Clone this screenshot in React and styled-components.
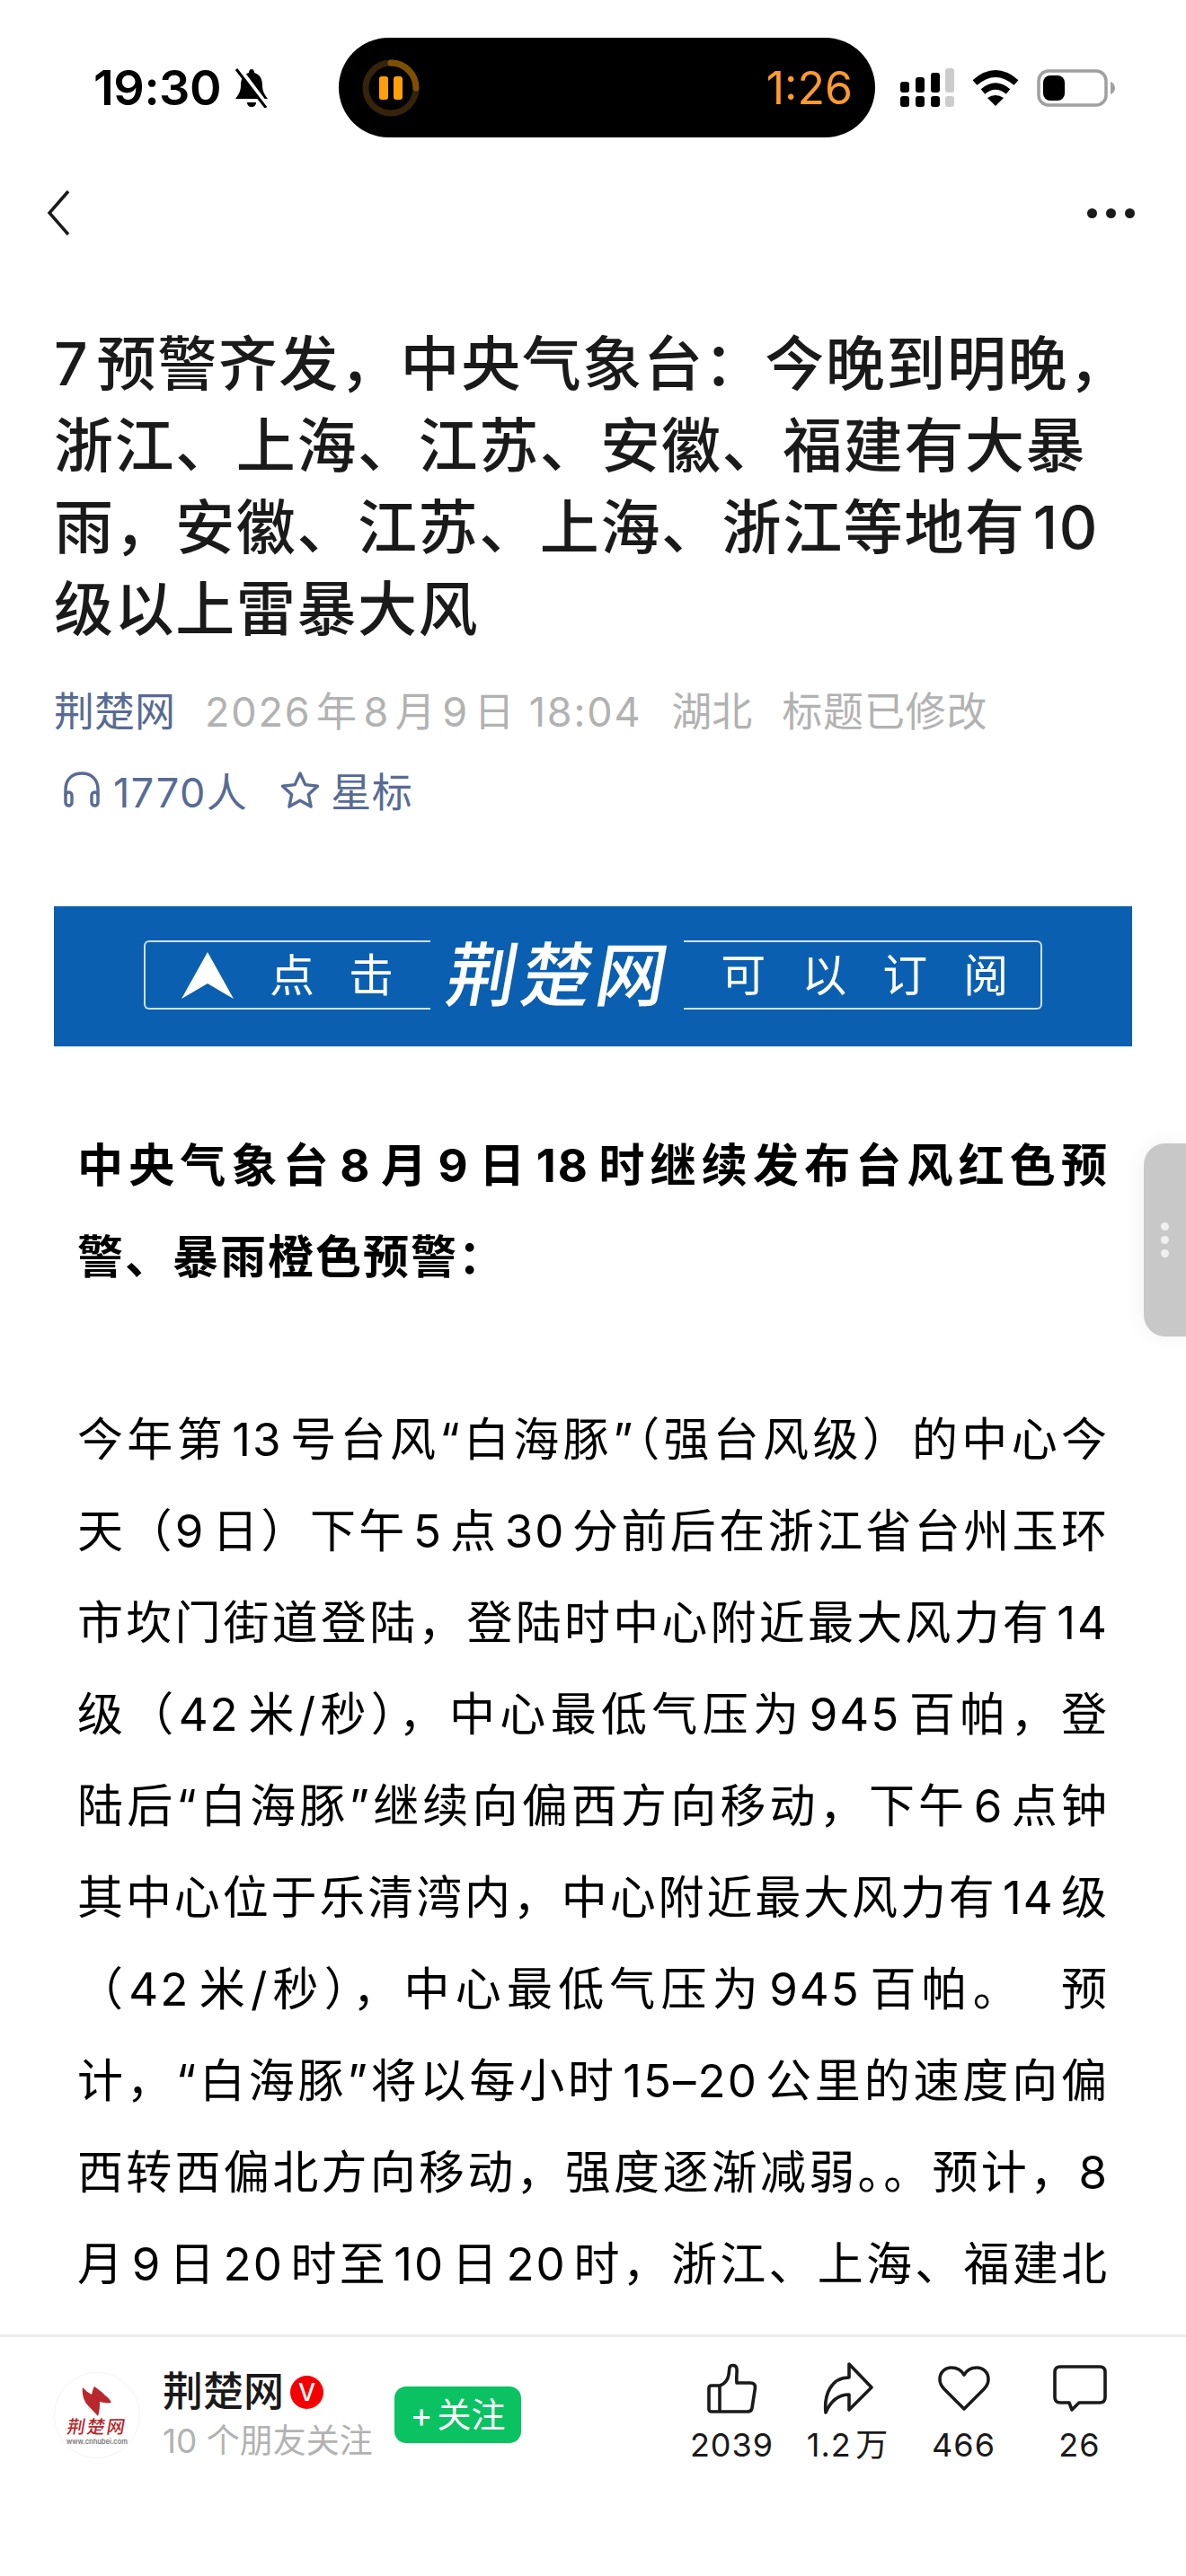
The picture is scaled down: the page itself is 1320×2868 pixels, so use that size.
import React from 'react'
import styled, { createGlobalStyle } from 'styled-components'

const sans = `Inter, "Noto Sans CJK SC", sans-serif`

const GlobalStyle = createGlobalStyle`
  html, body {
    margin: 0;
    padding: 0;
    background: #fff;
  }
  body {
    font-family: ${sans};
    text-autospace: normal;
  }
`

const Page = styled.div`
  width: 1320px;
  height: 2868px;
  display: flex;
  flex-direction: column;
  position: relative;
  overflow: hidden;
  background: #fff;
`

const StatusBar = styled.div`
  height: 111px;
  padding-top: 42px;
  display: flex;
  align-items: center;
  flex-shrink: 0;
`

const Clock = styled.div`
  width: 155px;
  margin-left: 104px;
  font-size: 54px;
  font-weight: 600;
  letter-spacing: -0.5px;
  color: #000;
`

const BellWrap = styled.div`
  width: 118px;
  display: flex;
  align-items: center;
`

const Island = styled.div`
  width: 597px;
  height: 111px;
  border-radius: 56px;
  background: #000;
  padding: 0 25px 0 26px;
  box-sizing: border-box;
  display: flex;
  align-items: center;
  justify-content: space-between;
`

const Timer = styled.div`
  font-size: 50px;
  color: #ff9a2e;
`

const StatusIcons = styled.div`
  display: flex;
  align-items: center;
  margin-left: 28px;
`

const NavBar = styled.div`
  height: 168px;
  padding: 0 57px 0 52px;
  display: flex;
  align-items: center;
  justify-content: space-between;
  flex-shrink: 0;
`

const Dots = styled.div`
  display: flex;
  gap: 10px;
`

const Dot = styled.span`
  width: 11px;
  height: 11px;
  border-radius: 50%;
  background: #1a1a1a;
`

const Header = styled.div`
  padding: 39px 60px 0;
  flex-shrink: 0;
`

const Title = styled.h1`
  margin: 0;
  font-size: 66px;
  line-height: 91px;
  font-weight: 500;
  color: #1a1a1a;
  letter-spacing: 1.6px;
`

const TitleLine = styled.span`
  display: block;
  white-space: nowrap;
`

const MetaRow = styled.div`
  margin-top: 35px;
  height: 60px;
  display: flex;
  align-items: center;
  font-size: 45px;
  color: #b2b2b2;
  white-space: nowrap;
`

const MetaItem = styled.span`
  margin-right: 33px;
  letter-spacing: ${p => p.$spacing || 0}px;
  color: ${p => (p.$link ? '#576b95' : '#b2b2b2')};
`

const InfoRow = styled.div`
  margin-top: 30px;
  height: 60px;
  display: flex;
  align-items: center;
  padding-left: 10px;
  font-size: 45px;
  color: #576b95;
`

const InfoLabel = styled.span`
  margin: 0 ${p => p.$after}px 0 ${p => p.$before}px;
  letter-spacing: ${p => p.$spacing}px;
  text-autospace: no-autospace;
`

const Banner = styled.div`
  margin: 100px 60px 0;
  height: 156px;
  background: #0a5fb0;
  padding: 38px 100px 41px;
  box-sizing: border-box;
  display: flex;
  align-items: stretch;
  flex-shrink: 0;
  color: #fff;
`

const BannerPart = styled.div`
  border: 2px solid #cfe0f2;
  border-${p => (p.$left ? 'right' : 'left')}: none;
  border-radius: ${p => (p.$left ? '6px 0 0 6px' : '0 6px 6px 0')};
  width: ${p => (p.$left ? 320 : 400)}px;
  box-sizing: border-box;
  display: flex;
  align-items: center;
  font-size: 50px;
  line-height: 1;
  white-space: nowrap;
  padding-left: ${p => (p.$left ? 40 : 41)}px;
`

const BannerWord = styled.span`
  margin-left: ${p => p.$left || 0}px;
`

const BannerBrand = styled.div`
  width: 283px;
  padding-left: 6px;
  box-sizing: border-box;
  display: flex;
  align-items: center;
  justify-content: center;
  font-size: 78px;
  font-weight: 500;
  letter-spacing: 5px;
  line-height: 1;
  white-space: nowrap;
  transform: skewX(-10deg);
`

const Article = styled.div`
  flex: 1;
  min-height: 0;
  overflow: hidden;
  margin-top: 82px;
  padding: 0 86px;
  color: #000;
  font-size: 51px;
  line-height: 102px;
  letter-spacing: 2px;
`

const Paragraph = styled.p`
  margin: 0 0 ${p => (p.$spaced ? 101 : 0)}px;
  font-weight: ${p => (p.$bold ? 700 : 400)};
`

const Line = styled.span`
  display: block;
  white-space: nowrap;
  text-align: justify;
  text-align-last: justify;
`

const SideHandle = styled.div`
  position: absolute;
  left: 1273px;
  top: 1273px;
  width: 47px;
  height: 215px;
  border-radius: 24px 0 0 24px;
  background: #c8c8c8;
  box-shadow: 0 0 24px rgba(0, 0, 0, 0.06);
  display: flex;
  flex-direction: column;
  align-items: flex-start;
  justify-content: center;
  gap: 6px;
  padding-left: 19px;
  box-sizing: border-box;
`

const HandleDot = styled.span`
  width: 9px;
  height: 9px;
  border-radius: 50%;
  background: #f0f0f0;
`

const Footer = styled.div`
  height: 269px;
  flex-shrink: 0;
  box-sizing: border-box;
  border-top: 3px solid #ececec;
  background: #fff;
  padding: 26px 54px 0 60px;
  display: flex;
  justify-content: space-between;
  align-items: flex-start;
`

const Author = styled.div`
  display: flex;
  align-items: flex-start;
  margin-top: 13px;
`

const Avatar = styled.div`
  width: 96px;
  height: 96px;
  border-radius: 50%;
  border: 1px solid #f4f4f4;
  box-sizing: border-box;
  display: flex;
  flex-direction: column;
  align-items: center;
  padding-top: 15px;
`

const AvatarName = styled.span`
  font-size: 20px;
  line-height: 24px;
  font-weight: 500;
  letter-spacing: 2px;
  color: #b8282c;
  transform: skewX(-10deg);
  white-space: nowrap;
`

const AvatarUrl = styled.span`
  font-size: 7.5px;
  line-height: 9px;
  font-weight: 600;
  color: #777;
  white-space: nowrap;
`

const AuthorText = styled.div`
  margin-left: 25px;
  width: 258px;
`

const AuthorName = styled.div`
  display: flex;
  align-items: center;
  font-size: 45px;
  line-height: 44px;
  font-weight: 500;
  color: #1a1a1a;
`

const Verified = styled.span`
  width: 37px;
  height: 37px;
  border-radius: 50%;
  margin-left: 7px;
  background: #f50000;
  color: #fff;
  font-size: 27px;
  line-height: 37px;
  font-weight: 500;
  text-align: center;
`

const Friends = styled.div`
  margin-top: 11px;
  font-size: 37px;
  line-height: 44px;
  color: #b2b2b2;
  white-space: nowrap;
`

const FollowButton = styled.div`
  margin-top: 16px;
  width: 141px;
  height: 63px;
  border-radius: 13px;
  background: #0ac261;
  color: #fff;
  font-size: 38px;
  line-height: 63px;
  display: flex;
  align-items: center;
  justify-content: center;
  gap: 5px;
  white-space: nowrap;
`

const Actions = styled.div`
  display: flex;
`

const Action = styled.div`
  width: 129px;
  display: flex;
  flex-direction: column;
  align-items: center;
  color: #1a1a1a;
`

const ActionIcon = styled.div`
  height: 62px;
  display: flex;
  align-items: center;
  justify-content: center;
`

const ActionCount = styled.div`
  margin-top: 10px;
  font-size: 36px;
  line-height: 44px;
  letter-spacing: 1px;
  white-space: nowrap;
`

const titleLines = [
  '7预警齐发，中央气象台：今晚到明晚，',
  '浙江、上海、江苏、安徽、福建有大暴',
  '雨，安徽、江苏、上海、浙江等地有10',
  '级以上雷暴大风',
]

const leadLines = [
  '中央气象台8月9日18时继续发布台风红色预',
  '警、暴雨橙色预警：',
]

const bodyLines = [
  '今年第13号台风“白海豚”（强台风级）的中心今',
  '天（9日）下午5点30分前后在浙江省台州玉环',
  '市坎门街道登陆，登陆时中心附近最大风力有14',
  '级（42米/秒），中心最低气压为945百帕，登',
  '陆后“白海豚”继续向偏西方向移动，下午6点钟',
  '其中心位于乐清湾内，中心附近最大风力有14级',
  '（42米/秒），中心最低气压为945百帕。\u00a0\u00a0预',
  '计，“白海豚”将以每小时15–20公里的速度向偏',
  '西转西偏北方向移动，强度逐渐减弱。。预计，8',
  '月9日20时至10日20时，浙江、上海、福建北',
]

function BellOff() {
  return (
    <svg width="42" height="44" viewBox="0 0 42 44">
      <path d="M21 1c2 0 3 2 3 4 7 2 9 8 9 14 0 7 3 11 6 15H3c3-4 6-8 6-15 0-6 2-12 9-14 0-2 1-4 3-4z" fill="#000" />
      <path d="M16 38h10c0 3-2 5-5 5s-5-2-5-5z" fill="#000" />
      <path d="M7 0l33 44" stroke="#fff" strokeWidth="5" />
      <path d="M4 1l33 43" stroke="#000" strokeWidth="3" />
    </svg>
  )
}

function PauseRing() {
  return (
    <svg width="64" height="64" viewBox="0 0 64 64">
      <circle cx="32" cy="32" r="28" fill="none" stroke="#35240a" strokeWidth="7" />
      <path d="M32 4a28 28 0 0 1 28 28" fill="none" stroke="#7f5004" strokeWidth="7" strokeLinecap="round" />
      <rect x="19" y="19" width="10" height="26" rx="3" fill="#ffa00a" />
      <rect x="35" y="19" width="10" height="26" rx="3" fill="#ffa00a" />
    </svg>
  )
}

function Signal() {
  return (
    <svg width="60" height="44" viewBox="0 0 60 44">
      <rect x="0" y="15" width="10" height="12" rx="3" fill="#000" />
      <rect x="17" y="10" width="10" height="17" rx="3" fill="#000" />
      <rect x="34" y="5" width="10" height="22" rx="3" fill="#000" />
      <rect x="50" y="0" width="10" height="27" rx="3" fill="#ccc" />
      <rect x="0" y="31" width="10" height="12" rx="3" fill="#000" />
      <rect x="17" y="31" width="10" height="12" rx="3" fill="#000" />
      <rect x="34" y="31" width="10" height="12" rx="3" fill="#000" />
      <rect x="50" y="31" width="10" height="12" rx="3" fill="#ccc" />
    </svg>
  )
}

function Wifi() {
  return (
    <svg width="54" height="40" viewBox="0 0 54 40" style={{ marginLeft: 19 }}>
      <path d="M4 14Q27-6 50 14" fill="none" stroke="#000" strokeWidth="7.5" />
      <path d="M13 24Q27 12 41 24" fill="none" stroke="#000" strokeWidth="7" />
      <path d="M27 40l-9-9q9-6 18 0z" fill="#000" />
    </svg>
  )
}

function Battery() {
  return (
    <svg width="88" height="42" viewBox="0 0 88 42" style={{ marginLeft: 19 }}>
      <rect x="2" y="2" width="75" height="38" rx="11" fill="none" stroke="#a0a0a0" strokeWidth="3.5" />
      <rect x="7" y="7" width="24" height="28" rx="8" fill="#000" />
      <path d="M82 14c3 1 5 4 5 7s-2 6-5 7z" fill="#a0a0a0" />
    </svg>
  )
}

function BackIcon() {
  return (
    <svg width="26" height="52" viewBox="0 0 26 52">
      <path d="M24 2L3 26l21 24" fill="none" stroke="#1a1a1a" strokeWidth="3.5" />
    </svg>
  )
}

function Headphones() {
  return (
    <svg width="42" height="40" viewBox="0 0 42 40" fill="none" stroke="#576b95" strokeWidth="3.4" strokeLinecap="round">
      <path d="M3 26V20C3 9 10 2 21 2s18 7 18 18v6" />
      <rect x="3" y="23" width="7" height="15" rx="3.5" />
      <rect x="32" y="23" width="7" height="15" rx="3.5" />
    </svg>
  )
}

function StarIcon() {
  return (
    <svg width="44" height="42" viewBox="0 0 44 42" fill="none" stroke="#576b95" strokeWidth="3.4" strokeLinejoin="round">
      <path d="M22 3l5.8 12.6 13.7 1.6-10.1 9.4 2.7 13.5L22 33.3l-12.1 6.8 2.7-13.5L2.5 17.2l13.7-1.6z" />
    </svg>
  )
}

function BannerArrow() {
  return (
    <svg width="58" height="52" viewBox="0 0 58 52" style={{ flexShrink: 0 }}>
      <path d="M29 0l29 52-29-17L0 52z" fill="#fff" />
    </svg>
  )
}

function BrushMark() {
  return (
    <svg width="34" height="33" viewBox="0 0 34 33">
      <path d="M1 1c3 3 6 6 10 8 1-3 1-6 3-9 4 3 9 6 12 10 3 2 5 4 7 8-4 1-9 0-13-1 0 5 0 10-2 16-4-5-9-9-13-14C2 14 0 8 1 1z" fill="#b8282c" />
    </svg>
  )
}

function LikeIcon() {
  return (
    <svg width="56" height="56" viewBox="0 0 56 56" fill="none" stroke="#1a1a1a" strokeWidth="3.6" strokeLinejoin="round">
      <path d="M14 25c6-2 9-6 10-12 .5-3 .5-6 1-8 .5-3 7-4 8 1 .6 4-.8 10 0 16h15c4 0 6 2 5.400 6l-3.400 22c-.5 3-2.500 4-5 4H5c-2 0-3-1-3-3V28c0-2 1-3 3-3z" />
      <path d="M14 25v29" />
    </svg>
  )
}

function ShareIcon() {
  return (
    <svg width="56" height="58" viewBox="0 0 56 58" fill="none" stroke="#1a1a1a" strokeWidth="3.6" strokeLinejoin="round">
      <path d="M29 2l25 26-25 25V36C17 36 9 42 3 56 1 36 9 17 29 17z" />
    </svg>
  )
}

function HeartIcon() {
  return (
    <svg width="58" height="50" viewBox="0 0 58 50" fill="none" stroke="#1a1a1a" strokeWidth="3.6" strokeLinejoin="round">
      <path d="M29 48L7 26C3 22 2 19 2 15 2 7 8 2 15 2c6 0 11 3 14 8 3-5 8-8 14-8 7 0 13 5 13 13 0 4-1 7-5 11z" />
    </svg>
  )
}

function CommentIcon() {
  return (
    <svg width="60" height="52" viewBox="0 0 60 52" fill="none" stroke="#1a1a1a" strokeWidth="3.6" strokeLinejoin="round">
      <path d="M8 2h44c4 0 6 2 6 6v28c0 4-2 6-6 6H29l-8 8-3-8H8c-4 0-6-2-6-6V8c0-4 2-6 6-6z" />
    </svg>
  )
}

const actions = [
  { icon: <LikeIcon />, count: '2039' },
  { icon: <ShareIcon />, count: '1.2万' },
  { icon: <HeartIcon />, count: '466' },
  { icon: <CommentIcon />, count: '26' },
]

export default function App() {
  return (
    <Page>
      <GlobalStyle />
      <StatusBar>
        <Clock>19:30</Clock>
        <BellWrap><BellOff /></BellWrap>
        <Island>
          <PauseRing />
          <Timer>1:26</Timer>
        </Island>
        <StatusIcons>
          <Signal />
          <Wifi />
          <Battery />
        </StatusIcons>
      </StatusBar>

      <NavBar>
        <BackIcon />
        <Dots><Dot /><Dot /><Dot /></Dots>
      </NavBar>

      <Header>
        <Title>
          {titleLines.map(line => <TitleLine key={line}>{line}</TitleLine>)}
        </Title>
        <MetaRow>
          <MetaItem $link>荆楚网</MetaItem>
          <MetaItem $spacing={1.8}>2026年8月9日 18:04</MetaItem>
          <MetaItem>湖北</MetaItem>
          <MetaItem $spacing={0.8}>标题已修改</MetaItem>
        </MetaRow>
        <InfoRow>
          <Headphones />
          <InfoLabel $before={14} $after={36} $spacing={1.5}>1770人</InfoLabel>
          <StarIcon />
          <InfoLabel $before={12} $after={0} $spacing={0.5}>星标</InfoLabel>
        </InfoRow>
      </Header>

      <Banner>
        <BannerPart $left>
          <BannerArrow />
          <BannerWord $left={40}>点</BannerWord>
          <BannerWord $left={38}>击</BannerWord>
        </BannerPart>
        <BannerBrand>荆楚网</BannerBrand>
        <BannerPart>
          <BannerWord>可</BannerWord>
          <BannerWord $left={40}>以</BannerWord>
          <BannerWord $left={40}>订</BannerWord>
          <BannerWord $left={40}>阅</BannerWord>
        </BannerPart>
      </Banner>

      <Article>
        <Paragraph $bold $spaced>
          <Line>{leadLines[0]}</Line>
          <span>{leadLines[1]}</span>
        </Paragraph>
        <Paragraph>
          {bodyLines.map(line => <Line key={line}>{line}</Line>)}
        </Paragraph>
      </Article>

      <SideHandle>
        <HandleDot />
        <HandleDot />
        <HandleDot />
      </SideHandle>

      <Footer>
        <Author>
          <Avatar>
            <BrushMark />
            <AvatarName>荆楚网</AvatarName>
            <AvatarUrl>www.cnhubei.com</AvatarUrl>
          </Avatar>
          <AuthorText>
            <AuthorName>荆楚网<Verified>V</Verified></AuthorName>
            <Friends>10 个朋友关注</Friends>
          </AuthorText>
          <FollowButton><span>+</span><span>关注</span></FollowButton>
        </Author>
        <Actions>
          {actions.map(a => (
            <Action key={a.count}>
              <ActionIcon>{a.icon}</ActionIcon>
              <ActionCount>{a.count}</ActionCount>
            </Action>
          ))}
        </Actions>
      </Footer>
    </Page>
  )
}
